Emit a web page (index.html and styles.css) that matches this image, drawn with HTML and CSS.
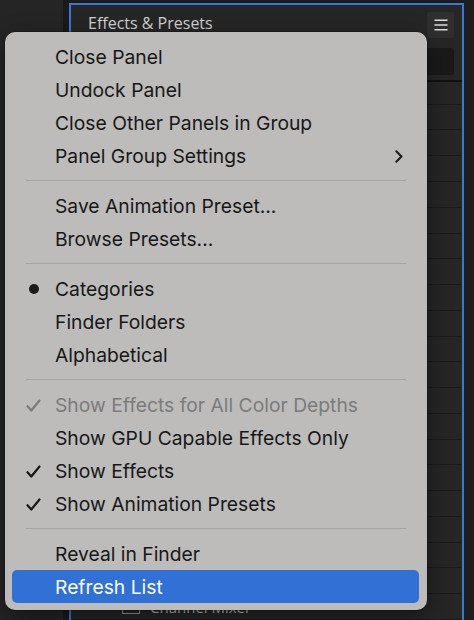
FILE: index.html
```html
<!DOCTYPE html>
<html lang="en">
<head>
<meta charset="utf-8">
<title>Effects &amp; Presets</title>
<link rel="stylesheet" href="styles.css">
</head>
<body>
<div class="app">
  <aside class="left-strip"></aside>
  <div class="gutter"></div>
  <section class="panel">
    <header class="panel-head">
      <h1 class="panel-title">Effects &amp; Presets</h1>
      <button class="menu-btn" aria-label="Panel menu">
        <svg width="14" height="12" viewBox="0 0 14 12"><path d="M0.5 1.3H13.5M0.5 6H13.5M0.5 10.7H13.5" stroke="#dcdcdc" stroke-width="1.5"/></svg>
      </button>
    </header>
    <div class="search"></div>
    <ul class="tree">
      <li class="row"></li>
      <li class="row"></li>
      <li class="row"></li>
      <li class="row"></li>
      <li class="row"></li>
      <li class="row"></li>
      <li class="row"></li>
      <li class="row"></li>
      <li class="row"></li>
      <li class="row"></li>
      <li class="row"></li>
      <li class="row"></li>
      <li class="row"></li>
      <li class="row"></li>
      <li class="row"></li>
      <li class="row"></li>
      <li class="row"></li>
      <li class="row"></li>
      <li class="row"></li>
      <li class="row"></li>
      <li class="row sub"><span class="fx">32</span><span class="name">Channel Mixer</span></li>
    </ul>
  </section>
  <div class="right-strip"></div>
</div>

<div class="context-menu" role="menu">
  <div class="item"><span class="mark"></span><span class="label">Close Panel</span></div>
  <div class="item"><span class="mark"></span><span class="label">Undock Panel</span></div>
  <div class="item"><span class="mark"></span><span class="label">Close Other Panels in Group</span></div>
  <div class="item"><span class="mark"></span><span class="label">Panel Group Settings</span>
    <svg class="chev" width="8" height="13" viewBox="0 0 8 13"><path d="M1.3 1.3L6.5 6.5L1.3 11.7" fill="none" stroke="#1b1b1b" stroke-width="2" stroke-linecap="round" stroke-linejoin="round"/></svg>
  </div>
  <div class="sep"></div>
  <div class="item"><span class="mark"></span><span class="label">Save Animation Preset...</span></div>
  <div class="item"><span class="mark"></span><span class="label">Browse Presets...</span></div>
  <div class="sep"></div>
  <div class="item"><span class="mark"><span class="bullet"></span></span><span class="label">Categories</span></div>
  <div class="item"><span class="mark"></span><span class="label">Finder Folders</span></div>
  <div class="item"><span class="mark"></span><span class="label">Alphabetical</span></div>
  <div class="sep"></div>
  <div class="item disabled"><span class="mark"><svg width="15" height="13" viewBox="0 0 15 13"><path d="M1.5 7.2L5.3 11.5L13.5 1.5" fill="none" stroke="currentColor" stroke-width="2.2" stroke-linecap="round" stroke-linejoin="round"/></svg></span><span class="label">Show Effects for All Color Depths</span></div>
  <div class="item"><span class="mark"></span><span class="label">Show GPU Capable Effects Only</span></div>
  <div class="item"><span class="mark"><svg width="15" height="13" viewBox="0 0 15 13"><path d="M1.5 7.2L5.3 11.5L13.5 1.5" fill="none" stroke="currentColor" stroke-width="2.2" stroke-linecap="round" stroke-linejoin="round"/></svg></span><span class="label">Show Effects</span></div>
  <div class="item"><span class="mark"><svg width="15" height="13" viewBox="0 0 15 13"><path d="M1.5 7.2L5.3 11.5L13.5 1.5" fill="none" stroke="currentColor" stroke-width="2.2" stroke-linecap="round" stroke-linejoin="round"/></svg></span><span class="label">Show Animation Presets</span></div>
  <div class="sep"></div>
  <div class="item"><span class="mark"></span><span class="label">Reveal in Finder</span></div>
  <div class="item active"><span class="mark"></span><span class="label">Refresh List</span></div>
</div>
</body>
</html>
```

FILE: styles.css
```css
* { box-sizing: border-box; }
html, body { margin: 0; padding: 0; }
body {
  width: 474px;
  height: 620px;
  overflow: hidden;
  background: #1c1c1c;
  font-family: "Inter", "Liberation Sans", sans-serif;
  position: relative;
}
.app {
  display: flex;
  height: 620px;
}
.left-strip {
  width: 63px;
  background: #252525;
}
.gutter {
  width: 6px;
  background: #1a1a1a;
}
.panel {
  width: 395px;
  margin-top: 3px;
  border: 2px solid #3b78d4;
  border-bottom: none;
  background: #262626;
  display: flex;
  flex-direction: column;
}
.panel-head {
  height: 40px;
  display: flex;
  align-items: center;
  justify-content: space-between;
  padding: 0 8px 0 17px;
}
.panel-title {
  margin: -3px 0 0;
  font-family: "Open Sans", sans-serif;
  font-weight: 400;
  font-size: 16px;
  color: #d2d2d2;
}
.menu-btn {
  width: 27px;
  height: 26px;
  border: none;
  border-radius: 2px;
  background: #2f2f2f;
  display: flex;
  align-items: center;
  justify-content: center;
  padding: 0;
}
.search {
  height: 27px;
  margin: 4px 8px 0 10px;
  background: #1a1a1a;
  border-radius: 3px;
}
.tree {
  list-style: none;
  margin: 5px 0 0;
  padding: 0;
  border-top: 2px solid #111;
}
.row {
  height: 25.78px;
  border-bottom: 1px solid #1b1b1b;
  display: flex;
  align-items: center;
  padding-left: 30px;
  color: #bdbdbd;
  font-family: "Open Sans", sans-serif;
  font-size: 15px;
  gap: 10px;
}
.row:first-child { height: 23px; }
.row.sub { padding-left: 51px; }
.fx {
  width: 18px;
  height: 14px;
  border: 1px solid #9a9a9a;
  font-size: 9px;
  line-height: 12px;
  text-align: center;
  color: #bdbdbd;
  font-weight: 700;
}
.right-strip {
  flex: 1;
  background: #1e1e1e;
}

/* context menu */
.context-menu {
  position: absolute;
  left: 5px;
  top: 32px;
  width: 422px;
  height: 578px;
  padding: 8px 0 7px;
  background: #bdbcbb;
  border-radius: 10px;
  box-shadow: 0 0 0 0.5px rgba(0,0,0,0.35), 0 8px 24px rgba(0,0,0,0.45);
  color: #171717;
  font-size: 19.3px;
}
.item {
  height: 33px;
  margin: 0 8px 0 7px;
  padding: 1px 16px 0 14px;
  border-radius: 5px;
  display: flex;
  align-items: center;
  gap: 14px;
}
.mark {
  width: 15px;
  height: 15px;
  display: flex;
  align-items: center;
  justify-content: center;
  flex-shrink: 0;
}
.bullet {
  width: 10px;
  height: 10px;
  border-radius: 50%;
  background: #1b1b1b;
}
.label { flex: 1; white-space: nowrap; }
.chev { flex-shrink: 0; }
.item.disabled { color: #7b7b7b; }
.item.active {
  background: #3170d4;
  color: #ffffff;
}
.sep {
  height: 1px;
  margin: 8px 21px;
  background: #a5a4a3;
}
```
